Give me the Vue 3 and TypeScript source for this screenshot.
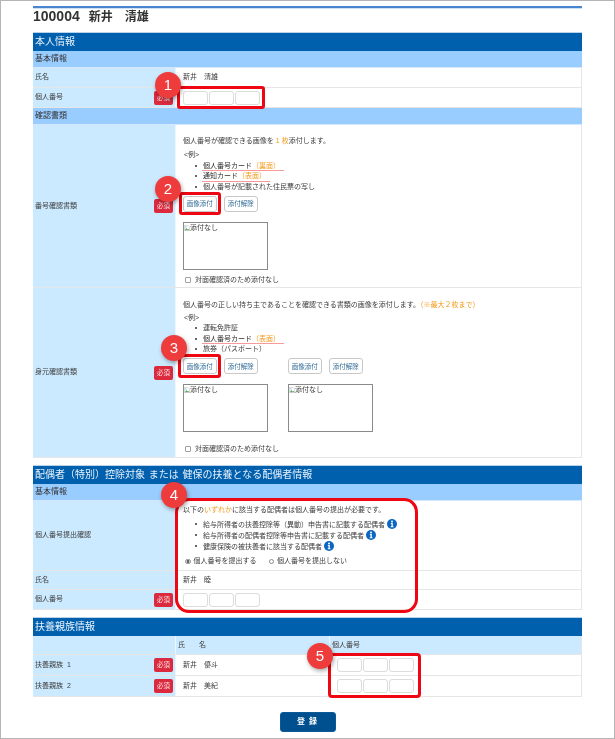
<script setup lang="ts">
const examplesA = [
  { text: '個人番号カード', note: '（裏面）', mark: true },
  { text: '通知カード', note: '（表面）', mark: true },
  { text: '個人番号が記載された住民票の写し', note: '', mark: false },
]
const examplesB = [
  { text: '運転免許証', note: '', mark: false },
  { text: '個人番号カード', note: '（表面）', mark: true },
  { text: '旅券（パスポート）', note: '', mark: false },
]
const spouseItems = [
  '給与所得者の扶養控除等（異動）申告書に記載する配偶者',
  '給与所得者の配偶者控除等申告書に記載する配偶者',
  '健康保険の被扶養者に該当する配偶者',
]
const relatives = [
  { label: '扶養親族\u00a0\u00a01', name: '新井　優斗' },
  { label: '扶養親族\u00a0\u00a02', name: '新井　美紀' },
]
const cells = [1, 2, 3]
const notes = [
  { n: 1, x: 168, y: 85 },
  { n: 2, x: 168, y: 189 },
  { n: 3, x: 174, y: 348 },
  { n: 4, x: 174, y: 495 },
  { n: 5, x: 320, y: 656 },
]
const frames = [
  { x: 177, y: 86, w: 88, h: 23, r: 3 },
  { x: 179, y: 192, w: 42, h: 23, r: 3 },
  { x: 178, y: 354, w: 43, h: 24, r: 3 },
  { x: 175, y: 498, w: 243, h: 115, r: 14 },
  { x: 328, y: 653, w: 93, h: 45, r: 4 },
]
</script>

<template>
  <div class="page">
    <main class="sheet">
      <h1 class="title"><span class="code">100004</span><span class="who">新井　清雄</span></h1>

      <section class="section first">
        <h2 class="head">本人情報</h2>
        <h3 class="sub">基本情報</h3>
        <div class="row h20">
          <div class="label">氏名</div>
          <div class="value plain">新井　清雄</div>
        </div>
        <div class="row h20">
          <div class="label">個人番号<span class="req">必須</span></div>
          <div class="value inputs"><span v-for="c in cells" :key="c" class="cell"></span></div>
        </div>
        <h3 class="sub">確認書類</h3>
        <div class="row h163">
          <div class="label">番号確認書類<span class="req">必須</span></div>
          <div class="value doc">
            <p class="intro">個人番号が確認できる画像を <em>1 枚</em>添付します。</p>
            <p class="eg-a">&lt;例&gt;</p>
            <ul class="list">
              <li v-for="e in examplesA" :key="e.text">
                <span :class="{ mark: e.mark }">{{ e.text }}<em v-if="e.note">{{ e.note }}</em></span>
              </li>
            </ul>
            <div class="attach">
              <div class="slot">
                <div class="btns"><button class="btn">画像添付</button><button class="btn">添付解除</button></div>
                <div class="photo">
                  <svg class="broken" viewBox="0 0 8 8"><path d="M.5.5h5l2 2v5H.5z" fill="#fff" stroke="#aaa" stroke-width=".6"/><path d="M1 7l2-3 1.500 2 1-1 2 2z" fill="#5aa85a"/><circle cx="2.500" cy="2.500" r="1" fill="#8cc0f0"/></svg>添付なし
                </div>
              </div>
            </div>
            <label class="check"><span class="box"></span>対面確認済のため添付なし</label>
          </div>
        </div>
        <div class="row h170">
          <div class="label">身元確認書類<span class="req">必須</span></div>
          <div class="value doc second">
            <p class="intro">個人番号の正しい持ち主であることを確認できる書類の画像を添付します。<em>（※最大２枚まで）</em></p>
            <p class="eg-b">&lt;例&gt;</p>
            <ul class="list">
              <li v-for="e in examplesB" :key="e.text">
                <span :class="{ mark: e.mark }">{{ e.text }}<em v-if="e.note">{{ e.note }}</em></span>
              </li>
            </ul>
            <div class="attach">
              <div v-for="s in 2" :key="s" class="slot">
                <div class="btns"><button class="btn">画像添付</button><button class="btn">添付解除</button></div>
                <div class="photo">
                  <svg class="broken" viewBox="0 0 8 8"><path d="M.5.5h5l2 2v5H.5z" fill="#fff" stroke="#aaa" stroke-width=".6"/><path d="M1 7l2-3 1.500 2 1-1 2 2z" fill="#5aa85a"/><circle cx="2.500" cy="2.500" r="1" fill="#8cc0f0"/></svg>添付なし
                </div>
              </div>
            </div>
            <label class="check"><span class="box"></span>対面確認済のため添付なし</label>
          </div>
        </div>
      </section>

      <section class="section">
        <h2 class="head">配偶者（特別）控除対象 または 健保の扶養となる配偶者情報</h2>
        <h3 class="sub">基本情報</h3>
        <div class="row h70">
          <div class="label">個人番号提出確認</div>
          <div class="value doc spouse">
            <p class="intro">以下の<em>いずれか</em>に該当する配偶者は個人番号の提出が必要です。</p>
            <ul class="list">
              <li v-for="t in spouseItems" :key="t">
                {{ t }}
                <svg class="info" viewBox="0 0 10 10"><circle cx="5" cy="5" r="5" fill="#0a66c2"/><circle cx="5" cy="2.500" r="1" fill="#fff"/><path d="M3.800 4h2v3.300h.7v.9H3.700v-.9h.8V4.900h-.7z" fill="#fff"/></svg>
              </li>
            </ul>
            <div class="radios">
              <label class="radio"><span class="dot on"></span>個人番号を提出する</label>
              <label class="radio"><span class="dot"></span>個人番号を提出しない</label>
            </div>
          </div>
        </div>
        <div class="row h19">
          <div class="label">氏名</div>
          <div class="value plain">新井　睦</div>
        </div>
        <div class="row h20">
          <div class="label">個人番号<span class="req">必須</span></div>
          <div class="value inputs"><span v-for="c in cells" :key="c" class="cell"></span></div>
        </div>
      </section>

      <section class="section">
        <h2 class="head">扶養親族情報</h2>
        <div class="row h19 thead">
          <div class="label"></div>
          <div class="name">氏　　名</div>
          <div class="num">個人番号</div>
        </div>
        <div v-for="r in relatives" :key="r.label" class="row h21">
          <div class="label">{{ r.label }}<span class="req">必須</span></div>
          <div class="name body">{{ r.name }}</div>
          <div class="num inputs"><span v-for="c in cells" :key="c" class="cell"></span></div>
        </div>
      </section>

      <div class="actions"><button class="submit">登 録</button></div>
    </main>

    <div
      v-for="f in frames"
      :key="f.x"
      class="frame"
      :style="{ left: f.x + 'px', top: f.y + 'px', width: f.w + 'px', height: f.h + 'px', borderRadius: f.r + 'px' }"
    ></div>
    <div
      v-for="n in notes"
      :key="n.n"
      class="badge"
      :style="{ left: n.x - 13 + 'px', top: n.y - 13 + 'px' }"
    >{{ n.n }}</div>
  </div>
</template>

<style scoped>
.page {
  position: relative;
  width: 615px;
  height: 739px;
  box-sizing: border-box;
  border: 1px solid #b5b5b5;
  background: #fff;
  overflow: hidden;
  color: #3c3c3c;
  font-family: "Liberation Sans", "Noto Sans CJK JP", sans-serif;
  font-size: 7px;
  line-height: 10.5px;
  filter: blur(0.3px);
}
.sheet {
  margin: 5px 32px 0 32px;
  border-top: 2px solid #4a86d0;
  box-shadow: inset 0 1px 0 #cfe0f5;
}
.title {
  margin: 0;
  height: 22px;
  box-sizing: border-box;
  font-size: 12px;
  line-height: 17px;
  font-weight: 700;
  color: #333;
}
.code { font-size: 14px; }
.who { margin-left: 9px; }
.section { margin-top: 7px; }
.section.first { margin-top: 2px; }
.head {
  margin: 0;
  height: 19px;
  padding-left: 2px;
  box-sizing: border-box;
  background: #0060ae;
  border-top: 1px solid #b9d4ea;
  color: #e8f2fb;
  font-size: 10px;
  font-weight: 400;
  line-height: 17px;
  word-spacing: 1px;
}
.sub {
  margin: 0;
  height: 17px;
  padding-left: 2px;
  background: #99ccff;
  border-bottom: 1px solid #d5e8fa;
  box-sizing: border-box;
  font-size: 8px;
  font-weight: 400;
  line-height: 16px;
  color: #333;
}
.row {
  display: flex;
  box-sizing: border-box;
  border-bottom: 1px solid #e6e6e6;
  border-right: 1px solid #e6e6e6;
}
.h19 { height: 19px; }
.h20 { height: 20px; }
.h21 { height: 21px; }
.h70 { height: 70px; }
.h163 { height: 163px; }
.h170 { height: 170px; }
.label {
  flex: 0 0 143px;
  box-sizing: border-box;
  display: flex;
  align-items: center;
  justify-content: space-between;
  padding: 0 2px;
  background: #cceaff;
  border-right: 1px solid #eef6fc;
}
.value { flex: 1; min-width: 0; }
.plain {
  display: flex;
  align-items: center;
  padding-left: 7px;
}
.inputs {
  display: flex;
  align-items: center;
  gap: 1px;
  padding-left: 7px;
}
.cell {
  width: 25px;
  height: 14px;
  box-sizing: border-box;
  border: 1px solid #dcdcdc;
  border-radius: 3px;
  background: #fff;
}
.req {
  width: 19px;
  height: 14px;
  border-radius: 2px;
  background: #db2a3d;
  color: #fbe3e5;
  text-align: center;
  line-height: 14px;
  font-size: 6.4px;
}
.doc { padding: 11px 0 0 7px; }
.doc.second { padding-top: 12px; }
p { margin: 0; }
em { font-style: normal; color: #f39a1d; }
.eg-a { margin: 3.5px 0 0 1px; }
.eg-b { margin: 2px 0 0 1px; }
.list {
  margin: 0;
  padding: 0 0 0 20px;
  list-style: none;
}
.list li { position: relative; white-space: nowrap; }
.list li::before {
  content: "";
  position: absolute;
  left: -8px;
  top: 4px;
  width: 2px;
  height: 2px;
  border-radius: 50%;
  background: #333;
}
.mark {
  display: inline-block;
  margin-left: -1px;
  padding: 0 4px 0 1px;
  border-bottom: 1px solid #f79a9a;
  line-height: 9.5px;
  color: #2c2c2c;
}
.attach {
  display: flex;
  gap: 21px;
  margin-top: 3.5px;
}
.slot { width: 84px; }
.btns { display: flex; gap: 7.5px; }
.btn {
  width: 33.5px;
  height: 16px;
  padding: 0;
  box-sizing: border-box;
  border: 1px solid #c8c8c8;
  border-radius: 3px;
  background: #fff;
  color: #2f6a96;
  font: inherit;
  font-size: 6.5px;
  line-height: 13px;
}
.photo {
  margin-top: 10px;
  width: 85px;
  height: 48px;
  box-sizing: border-box;
  border: 1px solid #8a8a8a;
  line-height: 9px;
  white-space: nowrap;
}
.broken { width: 6px; height: 6px; vertical-align: -1px; }
.check {
  display: flex;
  align-items: center;
  margin: 5px 0 0 2px;
  gap: 4px;
}
.box {
  width: 6px;
  height: 6px;
  box-sizing: border-box;
  border: 1px solid #a0a0a0;
  border-radius: 1px;
}
.second .check { margin-top: 12px; }
.spouse { padding-top: 4px; }
.spouse .list { margin-top: 3.5px; }
.info { width: 10px; height: 10px; vertical-align: -2.5px; }
.radios {
  display: flex;
  gap: 12px;
  margin: 4px 0 0 2px;
}
.radio { display: flex; align-items: center; gap: 3px; }
.dot {
  width: 5.5px;
  height: 5.5px;
  box-sizing: border-box;
  border: 1px solid #8a8a8a;
  border-radius: 50%;
}
.dot.on { background: radial-gradient(circle, #666 0 1.3px, #fff 1.6px); }
.name {
  flex: 0 0 154px;
  box-sizing: border-box;
  border-right: 1px solid #e6e6e6;
  padding-left: 2px;
  display: flex;
  align-items: center;
}
.name.body { padding-left: 7px; }
.num { flex: 1; display: flex; align-items: center; padding-left: 2px; }
.num.inputs { padding-left: 7px; }
.thead { background: #cceaff; }
.thead .name { border-right-color: #eef6fc; }
.actions {
  display: flex;
  justify-content: center;
  margin-top: 15px;
}
.submit {
  width: 56px;
  height: 20px;
  border: 1px solid #0b5a96;
  border-radius: 3px;
  background: #00508f;
  color: #fff;
  font: inherit;
  font-size: 8px;
  font-weight: 700;
  letter-spacing: 1px;
}
.frame {
  position: absolute;
  box-sizing: border-box;
  border: 3px solid #ee0612;
  margin: -1px 0 0 -1px;
}
.badge {
  position: absolute;
  width: 26px;
  height: 26px;
  margin: -1px 0 0 -1px;
  border-radius: 50%;
  background: #ee3b3b;
  color: #fff;
  font-size: 15px;
  line-height: 26px;
  text-align: center;
  box-shadow: 1px 2px 4px rgba(0, 0, 0, 0.35);
}
</style>
